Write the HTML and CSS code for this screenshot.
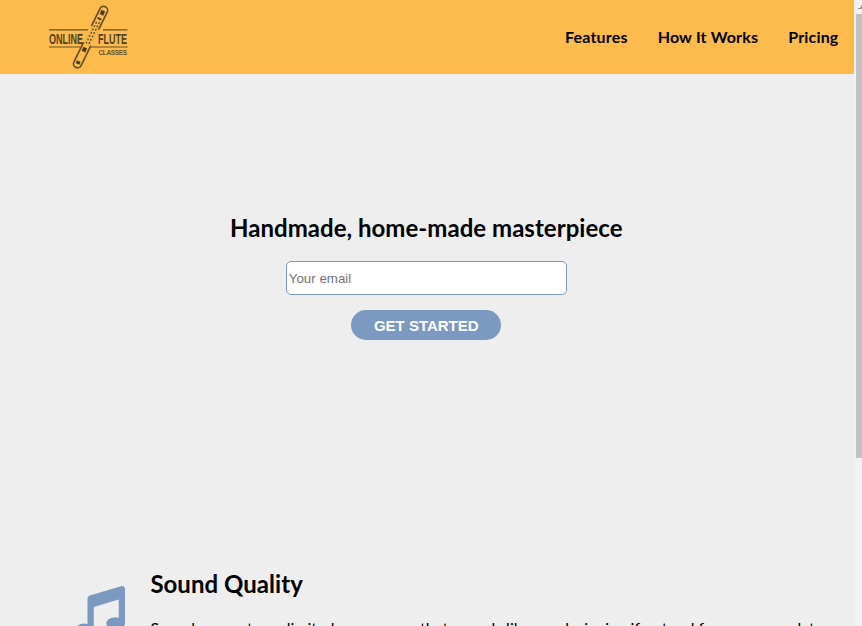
FILE: index.html
```html
<!DOCTYPE html>
<html lang="en">
<head>
<meta charset="utf-8">
<title>Online Flute Classes</title>
<link rel="stylesheet" href="styles.css">
</head>
<body>
<div class="viewport">
  <div class="page">
    <header class="header">
      <svg class="logo" viewBox="0 0 80 66" role="img" aria-label="Online Flute Classes">
        <path class="rule" d="M1 24.8H45M1 42H32M55 24.8H79.5M40 42H79.5"/>
        <g transform="rotate(26 43 32.2)">
          <rect class="flute" x="38.5" y="-1.5" width="8" height="67.5" rx="4"/>
          <path class="gap" d="M38.4 22V40M46.6 22V40"/>
          <path class="holes" d="M42.5 3v4.5M42.5 11v2M42.5 44v4.5M42.5 59v3"/>
          <path class="keys" d="M41.3 16v24M44 15v26"/>
        </g>
        <text class="word" x="1" y="38.8" textLength="34" lengthAdjust="spacingAndGlyphs">ONLINE</text>
        <text class="word" x="50" y="38.8" textLength="29" lengthAdjust="spacingAndGlyphs">FLUTE</text>
        <text class="small" x="50.5" y="49.7" textLength="28.5" lengthAdjust="spacing">CLASSES</text>
      </svg>
      <nav class="nav">
        <a href="#features">Features</a>
        <a href="#how">How It Works</a>
        <a href="#pricing">Pricing</a>
      </nav>
    </header>
    <main>
      <section class="hero">
        <h2>Handmade, home-made masterpiece</h2>
        <form class="signup">
          <input type="email" placeholder="Your email">
          <button type="button">GET STARTED</button>
        </form>
      </section>
      <section class="feature" id="features">
        <svg class="music" viewBox="0 0 512 512"><path d="M470.38 1.51 150.41 96A32 32 0 0 0 128 126.51v261.41A139 139 0 0 0 96 384c-53 0-96 28.66-96 64s43 64 96 64 96-28.66 96-64V214.32l256-75v184.61a138.4 138.4 0 0 0-32-3.93c-53 0-96 28.66-96 64s43 64 96 64 96-28.65 96-64V32a32 32 0 0 0-41.62-30.49z"/></svg>
        <div class="copy">
          <h2>Sound Quality</h2>
          <p>Sound amount a unlimited as a source that sounds like are designing if not red for your own data</p>
        </div>
      </section>
    </main>
  </div>
  <div class="scrollbar"><span class="arrow"></span><span class="thumb"></span></div>
</div>
</body>
</html>
```
FILE: styles.css
```css
* { box-sizing: border-box; }
body { margin: 0; background: #eee; color: #000; font-family: Lato, sans-serif; }
.viewport { display: flex; height: 626px; overflow: hidden; }
.page { width: 854px; flex: none; }
.header { display: flex; justify-content: space-between; height: 74px; padding: 5px 15.5px 0 48px; background: #fdbb4e; }
.logo { width: 80px; height: 66px; overflow: visible; }
.rule { fill: none; stroke: #6b5226; stroke-width: 1.2; }
.flute { fill: #fdbb4e; stroke: #66502a; stroke-width: 1.7; }
.gap { stroke: #fdbb4e; stroke-width: 2.2; }
.holes { stroke: #4d3c1d; stroke-width: 4; }
.keys { stroke: #6b5226; stroke-width: 1.5; stroke-dasharray: 2 1.7; }
.word { fill: #513f1d; font: bold 15px "Liberation Sans", sans-serif; }
.small { fill: #6b5226; font: bold 6.5px "Liberation Sans Narrow", "Liberation Sans", sans-serif; }
.nav { display: flex; gap: 30px; padding-top: 22px; }
.nav a { color: #000; font-size: 16px; line-height: 20px; font-weight: bold; letter-spacing: .18px; text-decoration: none; }
.hero { height: 475px; padding: 139px 1.5px 0 0; text-align: center; }
h2 { margin: 0; font-size: 24px; line-height: 29px; font-weight: bold; letter-spacing: .03px; }
.signup { display: flex; flex-direction: column; align-items: center; margin-top: 19px; }
.signup input { width: 281px; height: 34px; padding: 1px 2px; border: 1px solid #7b98c4; border-radius: 5px; background: #fff; font: 13.333px "Liberation Sans", sans-serif; }
.signup input::placeholder { color: #757575; }
.signup button { width: 150px; height: 30px; margin-top: 15px; padding: 1px 0 0; border: 0; border-radius: 15px; background: #7b99c1; color: #fff; font: bold 15px "Liberation Sans", sans-serif; }
.feature { display: flex; padding: 20px 0 0 75px; }
.music { flex: none; width: 50px; height: 50px; margin-top: 17px; fill: #7b99c1; }
.copy { margin-left: 25.4px; }
.copy p { margin: 20px 0 0; font-size: 16px; line-height: 20px; white-space: nowrap; }
.scrollbar { width: 8px; flex: none; padding-left: 2px; background: #f1f1f1; }
.arrow { display: block; width: 6px; height: 14px; background: linear-gradient(135deg, transparent 50%, #999 50%) 2px 4px / 5px 5px no-repeat; }
.thumb { display: block; height: 444px; background: #c1c1c1; }
```
